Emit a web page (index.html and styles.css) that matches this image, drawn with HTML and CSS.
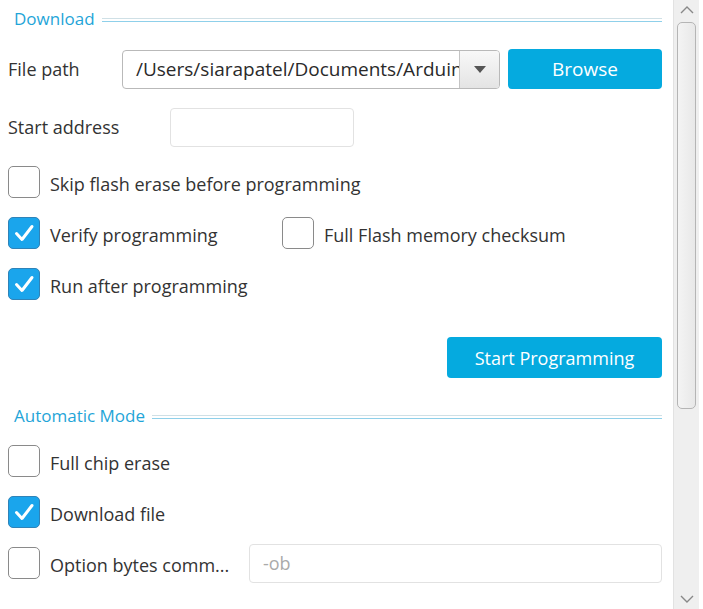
FILE: index.html
```html
<!DOCTYPE html>
<html>
<head>
<meta charset="utf-8">
<link rel="stylesheet" href="styles.css">
</head>
<body>
<div class="window">
  <div class="content">
    <div class="section-head"><span class="section-title">Download</span><span class="rule"></span></div>
    <div class="row row-file">
      <span class="label label-file">File path</span>
      <div class="combo">
        <span class="combo-text">/Users/siarapatel/Documents/Arduin</span>
        <span class="combo-arrow"><svg width="12" height="7" viewBox="0 0 12 7"><path d="M0 0H12L6 7Z" fill="#555"/></svg></span>
      </div>
      <button class="btn btn-browse">Browse</button>
    </div>
    <div class="row row-addr">
      <span class="label label-addr">Start address</span>
      <div class="input input-addr"></div>
    </div>
    <div class="row check-row row-skip">
      <span class="cb"></span><span class="cb-text">Skip flash erase before programming</span>
    </div>
    <div class="row check-row row-verify">
      <div class="check-pair pair-left">
        <span class="cb cb-on"><svg width="22" height="20" viewBox="0 0 22 20"><path d="M3.5 10.5L9 16.5L19 3.5" fill="none" stroke="#fff" stroke-width="3" stroke-linecap="round" stroke-linejoin="round"/></svg></span><span class="cb-text">Verify programming</span>
      </div>
      <div class="check-pair">
        <span class="cb"></span><span class="cb-text">Full Flash memory checksum</span>
      </div>
    </div>
    <div class="row check-row row-run">
      <span class="cb cb-on"><svg width="22" height="20" viewBox="0 0 22 20"><path d="M3.5 10.5L9 16.5L19 3.5" fill="none" stroke="#fff" stroke-width="3" stroke-linecap="round" stroke-linejoin="round"/></svg></span><span class="cb-text">Run after programming</span>
    </div>
    <div class="row row-start">
      <button class="btn btn-start">Start Programming</button>
    </div>
    <div class="section-head head-auto"><span class="section-title">Automatic Mode</span><span class="rule"></span></div>
    <div class="row check-row row-chip">
      <span class="cb"></span><span class="cb-text">Full chip erase</span>
    </div>
    <div class="row check-row row-dl">
      <span class="cb cb-on"><svg width="22" height="20" viewBox="0 0 22 20"><path d="M3.5 10.5L9 16.5L19 3.5" fill="none" stroke="#fff" stroke-width="3" stroke-linecap="round" stroke-linejoin="round"/></svg></span><span class="cb-text">Download file</span>
    </div>
    <div class="row check-row row-ob">
      <span class="cb"></span><span class="cb-text cb-ob">Option bytes comm...</span>
      <div class="input input-ob"><span class="placeholder">-ob</span></div>
    </div>
  </div>
  <div class="scrollbar">
    <svg class="arrow-up" width="14" height="8" viewBox="0 0 14 8"><path d="M1 7L7 1L13 7" fill="none" stroke="#888" stroke-width="1.4"/></svg>
    <div class="track"><div class="thumb"></div></div>
    <svg class="arrow-down" width="14" height="8" viewBox="0 0 14 8"><path d="M1 1L7 7L13 1" fill="none" stroke="#888" stroke-width="1.4"/></svg>
  </div>
</div>
</body>
</html>
```
FILE: styles.css
```css
html, body {
  margin: 0;
  padding: 0;
  background: #fff;
}
body {
  font-family: "Open Sans", Lato, sans-serif;
  color: #333;
}
.window {
  display: flex;
  width: 703px;
  height: 609px;
  overflow: hidden;
}
.content {
  width: 677px;
  padding: 0 15px 0 8px;
  box-sizing: border-box;
}
.section-head {
  display: flex;
  align-items: center;
  gap: 7px;
  height: 38px;
  padding-left: 6px;
}
.section-title {
  color: #1fa5d8;
  font-size: 17px;
  padding-bottom: 1px;
}
.rule {
  flex: 1;
  height: 2px;
  border-top: 1px solid #cfe0e6;
  border-bottom: 1px solid #8fd0ea;
  margin-top: 1px;
}
.row {
  display: flex;
  align-items: center;
}
.label {
  font-size: 18px;
}
.row-file {
  height: 40px;
  margin-top: 11px;
}
.label-file {
  width: 114px;
}
.combo {
  width: 378px;
  height: 39px;
  box-sizing: border-box;
  border: 1px solid #b9b9b9;
  border-radius: 4px;
  display: flex;
  overflow: hidden;
}
.combo-text {
  flex: 1;
  font-size: 19px;
  padding-left: 13px;
  line-height: 37px;
  white-space: nowrap;
  overflow: hidden;
  color: #2a2a2a;
}
.combo-arrow {
  flex: none;
  width: 39px;
  border-left: 1px solid #c4c4c4;
  background: linear-gradient(#f8f8f8, #e4e4e4);
  display: flex;
  align-items: center;
  justify-content: center;
}
.btn {
  border: none;
  background: #05aadf;
  color: #fff;
  font-family: "Open Sans", Lato, sans-serif;
  font-size: 18px;
  border-radius: 4px;
  padding: 0;
}
.btn-browse {
  width: 154px;
  height: 40px;
  margin-left: 8px;
  font-size: 19px;
}
.row-addr {
  height: 40px;
  margin-top: 18px;
}
.label-addr {
  width: 162px;
}
.input {
  box-sizing: border-box;
  border: 1px solid #e2e2e2;
  border-radius: 4px;
  height: 39px;
  background: #fff;
}
.input-addr {
  width: 184px;
}
.check-row {
  height: 32px;
}
.row-skip { margin-top: 19px; }
.row-verify { margin-top: 19px; }
.row-run { margin-top: 19px; }
.check-pair {
  display: flex;
  align-items: center;
}
.pair-left {
  width: 274px;
}
.cb {
  width: 32px;
  height: 32px;
  box-sizing: border-box;
  border: 1px solid #8a8a8a;
  border-radius: 5px;
  background: #fff;
  display: flex;
  align-items: center;
  justify-content: center;
  flex: none;
}
.cb-on {
  background: #1aa5ec;
  border-color: #2f83b8;
}
.cb-text {
  font-size: 18px;
  margin-left: 10px;
  padding-top: 3px;
  white-space: nowrap;
}
.row-start {
  justify-content: flex-end;
  margin-top: 37px;
}
.btn-start {
  width: 215px;
  height: 41px;
}
.head-auto {
  margin-top: 19px;
}
.row-chip { margin-top: 10px; }
.row-dl { margin-top: 19px; }
.row-ob { margin-top: 19px; }
.cb-ob {
  width: 199px;
}
.input-ob {
  flex: 1;
  display: flex;
  align-items: center;
  padding-left: 13px;
}
.placeholder {
  color: #aaa;
  font-size: 18px;
}
.scrollbar {
  width: 26px;
  height: 609px;
  display: flex;
  flex-direction: column;
  align-items: center;
  background: #efefef;
  border-left: 1px solid #e2e2e2;
  box-sizing: border-box;
  margin-left: -4px;
}
.arrow-up {
  margin-top: 6px;
  flex: none;
}
.track {
  flex: 1;
  width: 100%;
  padding: 8px 3px 0;
  box-sizing: border-box;
}
.thumb {
  height: 385px;
  border: 1px solid #b5b5b5;
  border-radius: 5px;
  background: linear-gradient(90deg, #f4f4f4, #e8e8e8);
}
.arrow-down {
  margin-bottom: 6px;
  flex: none;
}
```
